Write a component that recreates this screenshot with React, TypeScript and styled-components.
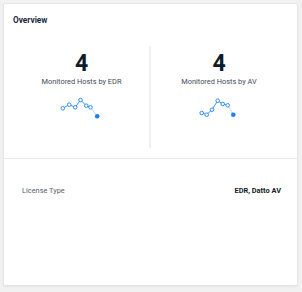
import React from 'react'
import styled, { createGlobalStyle } from 'styled-components'

const GlobalStyle = createGlobalStyle`
  html, body {
    margin: 0;
    padding: 0;
    background: #f1f1f1;
    font-family: Roboto, "Liberation Sans", sans-serif;
  }
`

const Page = styled.div`
  padding: 3px 4px 6px 3px;
`

const Card = styled.div`
  box-sizing: border-box;
  width: 295px;
  height: 283px;
  background: #fff;
  border: 1px solid #e6e6e6;
  border-radius: 2px;
  box-shadow: 0 1px 2px rgba(0, 0, 0, 0.06);
  display: flex;
  flex-direction: column;
`

const Title = styled.div`
  padding: 8px 9px 0;
  height: 16px;
  font-size: 8.3px;
  font-weight: 700;
  line-height: 16px;
  color: #1b2a3b;
`

const Stats = styled.div`
  display: grid;
  grid-template-columns: 137px 1fr;
  margin: 18px 10px 0;
  height: 102px;
`

const Stat = styled.div<{ $divider?: boolean }>`
  display: flex;
  flex-direction: column;
  align-items: center;
  border-right: ${p => (p.$divider ? '2px solid #f0f0f0' : 'none')};
  padding-top: 7px;
`

const Value = styled.div`
  font-size: 23px;
  font-weight: 700;
  line-height: 22px;
  color: #0e1b2b;
`

const Label = styled.div`
  margin-top: 1px;
  font-size: 7.4px;
  line-height: 11px;
  color: #434b57;
`

const Spark = styled.svg`
  margin-top: 10px;
`

const Rule = styled.div`
  height: 1px;
  background: #e9e9e9;
  margin-top: 10px;
`

const Row = styled.div`
  display: flex;
  justify-content: space-between;
  align-items: center;
  padding: 26px 16px 0 18px;
  font-size: 7.4px;
  line-height: 12px;
`

const Key = styled.span`
  color: #565f6c;
`

const Val = styled.span`
  font-weight: 700;
  color: #111a26;
`

type Pt = [number, number]

const Sparkline = ({ pts }: { pts: Pt[] }) => {
  const main = pts.slice(0, -1)
  const last = pts[pts.length - 1]
  const prev = main[main.length - 1]
  return (
    <Spark width="44" height="24" viewBox="0 0 44 24">
      <polyline
        points={main.map(p => p.join(',')).join(' ')}
        fill="none"
        stroke="#3b95f5"
        strokeWidth="1"
      />
      <line x1={prev[0]} y1={prev[1]} x2={last[0]} y2={last[1]} stroke="#8cc0f8" strokeWidth="1" strokeDasharray="1.5 1" />
      {main.map((p, i) => (
        <circle key={i} cx={p[0]} cy={p[1]} r="1.8" fill="#fff" stroke="#2f8ef5" strokeWidth="1" />
      ))}
      <circle cx={last[0]} cy={last[1]} r="2.3" fill="#1f80f2" />
    </Spark>
  )
}

// points relative to each chart's box
const edrPts: Pt[] = [[2.8, 11.3], [9.2, 7.7], [15.2, 10.3], [20.5, 3], [26.2, 8.7], [30.5, 10.3], [37.2, 19.3]]
const avPts: Pt[] = [[4.7, 16], [9.7, 17.7], [15, 12.7], [20.7, 3.7], [25.7, 7], [30.7, 8.3], [36.3, 17.7]]

export default function App() {
  return (
    <>
      <GlobalStyle />
      <Page>
        <Card>
          <Title>Overview</Title>
          <Stats>
            <Stat $divider>
              <Value>4</Value>
              <Label>Monitored Hosts by EDR</Label>
              <Sparkline pts={edrPts} />
            </Stat>
            <Stat>
              <Value>4</Value>
              <Label>Monitored Hosts by AV</Label>
              <Sparkline pts={avPts} />
            </Stat>
          </Stats>
          <Rule />
          <Row>
            <Key>License Type</Key>
            <Val>EDR, Datto AV</Val>
          </Row>
        </Card>
      </Page>
    </>
  )
}
